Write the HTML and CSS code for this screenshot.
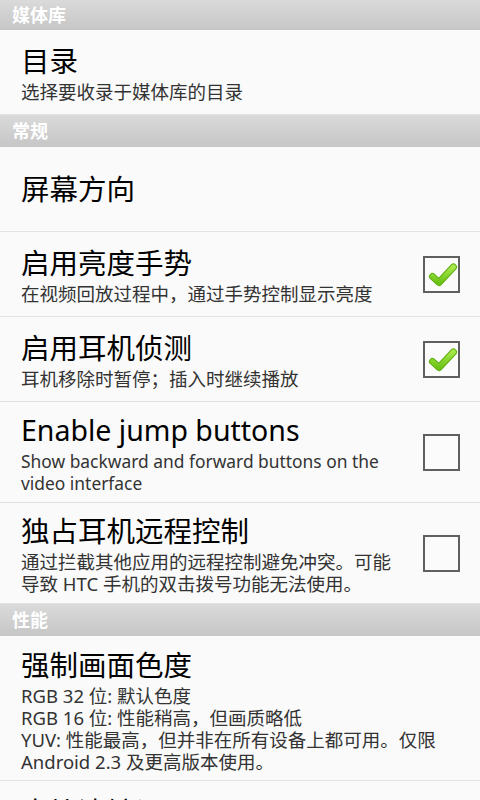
FILE: index.html
```html
<!DOCTYPE html>
<html lang="zh-CN">
<head>
<meta charset="utf-8">
<title>偏好设置</title>
<link rel="stylesheet" href="styles.css">
</head>
<body>
<div class="list">
  <div class="header header-first">媒体库</div>
  <div class="item">
    <div class="text">
      <div class="title">目录</div>
      <div class="summary">选择要收录于媒体库的目录</div>
    </div>
  </div>

  <div class="header">常规</div>
  <div class="item">
    <div class="text">
      <div class="title">屏幕方向</div>
    </div>
  </div>
  <div class="item">
    <div class="text">
      <div class="title">启用亮度手势</div>
      <div class="summary">在视频回放过程中，通过手势控制显示亮度</div>
    </div>
    <div class="widget">
      <svg class="checkbox" width="37" height="37" viewBox="0 0 37 37">
        <defs>
          <linearGradient id="g1" x1="0" y1="0" x2="0" y2="1">
            <stop offset="0" stop-color="#a6e84a"/>
            <stop offset="1" stop-color="#6cc316"/>
          </linearGradient>
        </defs>
        <rect x="1" y="1" width="35" height="35" fill="#fbfbfb" stroke="#5f5f5f" stroke-width="2"/>
        <path d="M9.5 20.5 L16 26.5 L30.5 11" fill="none" stroke="#5fae12" stroke-width="7" stroke-linecap="round" stroke-linejoin="round"/>
        <path d="M9.5 20.5 L16 26.5 L30.5 11" fill="none" stroke="url(#g1)" stroke-width="5" stroke-linecap="round" stroke-linejoin="round"/>
      </svg>
    </div>
  </div>
  <div class="item">
    <div class="text">
      <div class="title">启用耳机侦测</div>
      <div class="summary">耳机移除时暂停；插入时继续播放</div>
    </div>
    <div class="widget">
      <svg class="checkbox" width="37" height="37" viewBox="0 0 37 37">
        <defs>
          <linearGradient id="g2" x1="0" y1="0" x2="0" y2="1">
            <stop offset="0" stop-color="#a6e84a"/>
            <stop offset="1" stop-color="#6cc316"/>
          </linearGradient>
        </defs>
        <rect x="1" y="1" width="35" height="35" fill="#fbfbfb" stroke="#5f5f5f" stroke-width="2"/>
        <path d="M9.5 20.5 L16 26.5 L30.5 11" fill="none" stroke="#5fae12" stroke-width="7" stroke-linecap="round" stroke-linejoin="round"/>
        <path d="M9.5 20.5 L16 26.5 L30.5 11" fill="none" stroke="url(#g2)" stroke-width="5" stroke-linecap="round" stroke-linejoin="round"/>
      </svg>
    </div>
  </div>
  <div class="item">
    <div class="text">
      <div class="title">Enable jump buttons</div>
      <div class="summary summary-latin">Show backward and forward buttons on the video interface</div>
    </div>
    <div class="widget">
      <svg class="checkbox" width="37" height="37" viewBox="0 0 37 37">
        <rect x="1" y="1" width="35" height="35" fill="#fbfbfb" stroke="#5f5f5f" stroke-width="2"/>
      </svg>
    </div>
  </div>
  <div class="item">
    <div class="text">
      <div class="title">独占耳机远程控制</div>
      <div class="summary">通过拦截其他应用的远程控制避免冲突。可能导致 HTC 手机的双击拨号功能无法使用。</div>
    </div>
    <div class="widget">
      <svg class="checkbox" width="37" height="37" viewBox="0 0 37 37">
        <rect x="1" y="1" width="35" height="35" fill="#fbfbfb" stroke="#5f5f5f" stroke-width="2"/>
      </svg>
    </div>
  </div>

  <div class="header">性能</div>
  <div class="item item-tall">
    <div class="text">
      <div class="title">强制画面色度</div>
      <div class="summary">RGB 32 位: 默认色度<br>RGB 16 位: 性能稍高，但画质略低<br>YUV: 性能最高，但并非在所有设备上都可用。仅限 Android 2.3 及更高版本使用。</div>
    </div>
  </div>
  <div class="item">
    <div class="text">
      <div class="title">去块滤镜设置</div>
      <div class="summary">更改去块滤镜设置。可能会提高视频质量。</div>
    </div>
  </div>
</div>
</body>
</html>
```

FILE: styles.css
```css
html, body {
  margin: 0;
  padding: 0;
  background: #fafafa;
}

body {
  width: 480px;
  height: 800px;
  overflow: hidden;
  font-family: "Noto Sans", "Noto Sans CJK SC", sans-serif;
  color: #000;
}

.list {
  display: flex;
  flex-direction: column;
}

.header {
  box-sizing: border-box;
  height: 32px;
  padding-left: 12px;
  display: flex;
  align-items: center;
  background: linear-gradient(#dadada, #c6c6c6);
  color: #fff;
  font-size: 18px;
  font-weight: bold;
  line-height: 1;
}

.header-first {
  height: 30px;
}

.item {
  box-sizing: border-box;
  min-height: 85px;
  padding-left: 21px;
  padding-right: 20px;
  display: flex;
  align-items: center;
  border-bottom: 1px solid #e3e3e3;
}

.text {
  flex: 1;
  padding: 8px 0;
  min-width: 0;
}

.item-tall .text {
  padding-top: 9px;
  padding-bottom: 7px;
}

.title {
  font-size: 28.5px;
  line-height: 40px;
  color: #000;
  white-space: nowrap;
}

.summary {
  font-size: 18.5px;
  line-height: 22px;
  color: #333;
}

.summary-latin {
  font-size: 17.4px;
}

.widget {
  flex: none;
  width: 60px;
  display: flex;
  justify-content: flex-end;
}

.checkbox {
  display: block;
}
```
